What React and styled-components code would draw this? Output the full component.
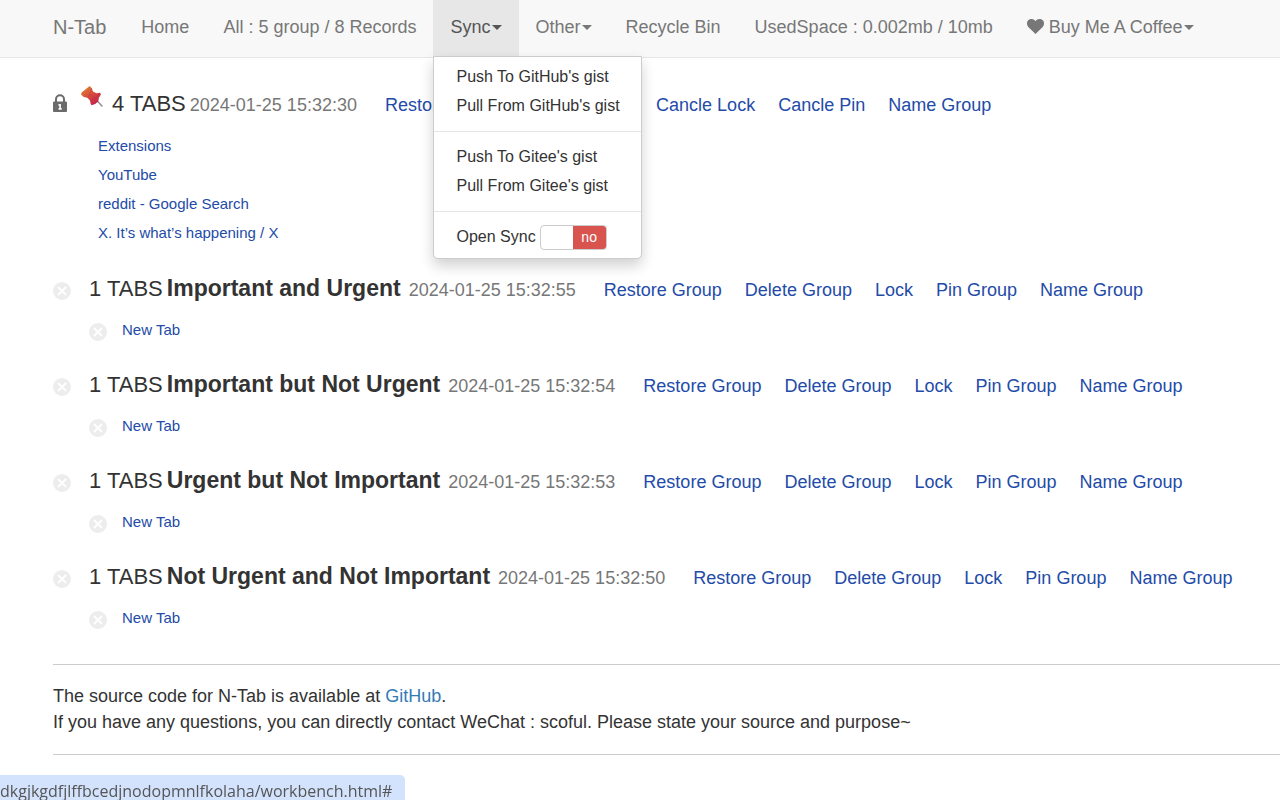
import React from "react"
import styled, { createGlobalStyle } from "styled-components"

const GlobalStyle = createGlobalStyle`
  * {
    box-sizing: border-box;
  }

  body {
    margin: 0;
    background: #fff;
    color: #333;
    font: 18px/26px "Liberation Sans", Arial, sans-serif;
  }

  a {
    color: #234ba8;
    text-decoration: none;
  }
`

const Navbar = styled.nav`
  display: flex;
  padding-left: 36px;
  background: #f8f8f8;
  border-bottom: 1px solid #e7e7e7;
  white-space: nowrap;
`

const NavItem = styled.div`
  position: relative;
`

const NavLink = styled.a`
  display: flex;
  align-items: center;
  height: 57px;
  padding: 0 17px 3px;
  color: ${({ $open }) => ($open ? "#555" : "#777")};
  background: ${({ $open }) => ($open ? "#e7e7e7" : "transparent")};
`

const Brand = styled(NavLink)`
  padding-right: 18px;
  font-size: 20px;
`

const Caret = styled.span`
  margin-left: 1px;
  border-top: 5px solid;
  border-left: 5px solid transparent;
  border-right: 5px solid transparent;
`

const HeartIcon = styled.svg`
  width: 17px;
  height: 16px;
  margin-right: 5px;
`

const Menu = styled.div`
  position: absolute;
  top: 56px;
  left: 0;
  z-index: 10;
  padding: 5px 0 7px;
  background: #fff;
  border: 1px solid #ccc;
  border-radius: 0 0 5px 5px;
  box-shadow: 0 7px 14px rgba(0, 0, 0, 0.18);
  font-size: 16px;
  line-height: 29px;

  hr {
    margin: 11px 0 10px;
    border: 0;
    border-top: 1px solid #e5e5e5;
  }
`

const MenuLink = styled.a`
  display: block;
  padding: 0 21px 0 22px;
  color: #333;
`

const SwitchLabel = styled.label`
  display: flex;
  align-items: center;
  gap: 4px;
  padding: 0 21px 0 22px;
`

const Switch = styled.input`
  appearance: none;
  width: 67px;
  height: 25px;
  margin: 2px 0 0;
  border: 1px solid #ccc;
  border-radius: 4px;
  overflow: hidden;
  display: flex;
  justify-content: flex-end;

  &::after {
    content: "no";
    width: 33px;
    background: #d9534f;
    color: #fff;
    font: 14px/23px "Liberation Sans", Arial, sans-serif;
    text-align: center;
  }

  &:checked {
    justify-content: flex-start;
  }

  &:checked::after {
    content: "yes";
    background: #337ab7;
  }
`

const Content = styled.main`
  padding: 32px 0 0 53px;
`

const Group = styled.section`
  margin-bottom: ${({ $locked }) => ($locked ? "27px" : "26px")};
`

const GroupHeader = styled.header`
  display: flex;
  height: 30px;
  line-height: 28px;
  white-space: nowrap;
`

const LockIcon = styled.svg`
  width: 14px;
  height: 18px;
  margin: 4px 14px 0 0;
`

const PinIcon = styled.svg`
  width: 22px;
  height: 22px;
  margin: -4px 9px 0 0;
`

const GroupTitle = styled.div`
  display: flex;
  align-items: baseline;
  gap: 4px;
`

const Count = styled.span`
  font-size: 22px;
`

const Name = styled.strong`
  margin-right: 4px;
  font-size: 23px;
`

const Time = styled.time`
  color: #777;
`

const Actions = styled.div`
  display: flex;
  align-items: baseline;
  gap: 23px;
  margin-left: 24px;
`

const TabList = styled.ul`
  margin: 11px 0 0;
  padding: 0 0 0 ${({ $locked }) => ($locked ? "45px" : "36px")};
  list-style: none;
  font-size: 15px;
  line-height: 29px;
`

const Tab = styled.li`
  display: flex;
`

const RemoveButton = styled.button`
  width: 18px;
  height: 18px;
  margin: 8px ${({ $tab }) => ($tab ? "15px" : "18px")} 0 0;
  padding: 0;
  border: 0;
  background: none;

  svg {
    display: block;
  }
`

const Footer = styled.footer`
  margin-top: 32px;
  padding: 18px 0 19px;
  border-top: 1px solid #ccc;
  border-bottom: 1px solid #ccc;

  p {
    margin: 0;
  }

  a {
    color: #337ab7;
  }
`

const StatusBar = styled.div`
  position: fixed;
  left: 0;
  bottom: 0;
  height: 25px;
  padding-right: 13px;
  background: #d3e3fd;
  border-top-right-radius: 5px;
  color: #555;
  font: 16px/32px "Open Sans", "Noto Sans", sans-serif;
`

const Remove = ({ label, tab }) => (
  <RemoveButton type="button" aria-label={label} $tab={tab}>
    <svg width="18" height="18" viewBox="0 0 18 18">
      <circle cx="9" cy="9" r="9" fill="#ededed" />
      <path d="M5 5l8 8M13 5l-8 8" stroke="#fff" strokeWidth="1.8" />
    </svg>
  </RemoveButton>
)

const Lock = () => (
  <LockIcon viewBox="0 0 14 18" aria-hidden="true">
    <path
      d="M3 9V5.2a4 4 0 0 1 8 0V9"
      fill="none"
      stroke="#6b6b6b"
      strokeWidth="2"
    />
    <rect y="7.5" width="14" height="10.5" rx="1" fill="#6b6b6b" />
    <path d="M5.5 10h2.4v4h.8v1.7H5.6V14h.7v-2.3h-.8z" fill="#fff" />
  </LockIcon>
)

const Pin = () => (
  <PinIcon viewBox="0 0 22 22" aria-hidden="true">
    <defs>
      <linearGradient id="pin" x1="0" y1="0" x2="0.7" y2="1">
        <stop offset="0" stopColor="#e0902f" />
        <stop offset="0.5" stopColor="#d8503c" />
        <stop offset="1" stopColor="#c4204d" />
      </linearGradient>
    </defs>
    <path d="M14 12.5l7.4 8" stroke="#8f8f8f" strokeWidth="1.4" />
    <path
      d="M8.6 0L10.8 2.2 12 5.6 15.5 7.2 19 6.8 20 8.6 18 11.4 17.2 15.4 14.2 18 10.6 19.2 9.6 17.8 9 14.6 6.4 11.8 2.8 11 0 8.4 0.8 6.2 5 3z"
      fill="url(#pin)"
    />
    <path
      d="M10.8 2.2L9 8 14.2 12 19 6.8M6.4 11.8L9 8M9 14.6L14.2 12"
      fill="none"
      stroke="#b8293d"
      strokeOpacity="0.5"
      strokeWidth="0.7"
    />
  </PinIcon>
)

const Heart = () => (
  <HeartIcon viewBox="0 0 17 16" aria-hidden="true">
    <path
      d="M8.5 15L1.3 8C-.3 6.2-.4 3.4.8 1.8 2.5-.5 6.7-.8 8.5 2.3 10.3-.8 14.5-.5 16.2 1.8c1.2 1.6 1.1 4.4-.5 6.2z"
      fill="currentColor"
    />
  </HeartIcon>
)

const groups = [
  {
    time: "2024-01-25 15:32:30",
    locked: true,
    tabs: [
      "Extensions",
      "YouTube",
      "reddit - Google Search",
      "X. It’s what’s happening / X",
    ],
  },
  {
    name: "Important and Urgent",
    time: "2024-01-25 15:32:55",
    tabs: ["New Tab"],
  },
  {
    name: "Important but Not Urgent",
    time: "2024-01-25 15:32:54",
    tabs: ["New Tab"],
  },
  {
    name: "Urgent but Not Important",
    time: "2024-01-25 15:32:53",
    tabs: ["New Tab"],
  },
  {
    name: "Not Urgent and Not Important",
    time: "2024-01-25 15:32:50",
    tabs: ["New Tab"],
  },
]

const openActions = [
  "Restore Group",
  "Delete Group",
  "Lock",
  "Pin Group",
  "Name Group",
]
const lockedActions = [
  "Restore Group",
  "Delete Group",
  "Cancle Lock",
  "Cancle Pin",
  "Name Group",
]

const TabGroup = ({ name, time, locked, tabs }) => (
  <Group $locked={locked}>
    <GroupHeader>
      {locked ? (
        <>
          <Lock />
          <Pin />
        </>
      ) : (
        <Remove label="Remove group" />
      )}
      <GroupTitle>
        <Count>{tabs.length} TABS</Count>
        {name && <Name>{name}</Name>}
        <Time>{time}</Time>
        <Actions>
          {(locked ? lockedActions : openActions).map(action => (
            <a key={action} href="#">
              {action}
            </a>
          ))}
        </Actions>
      </GroupTitle>
    </GroupHeader>
    <TabList $locked={locked}>
      {tabs.map(tab => (
        <Tab key={tab}>
          {!locked && <Remove label="Remove tab" tab />}
          <a href="#">{tab}</a>
        </Tab>
      ))}
    </TabList>
  </Group>
)

const SyncMenu = () => (
  <Menu>
    <MenuLink href="#">Push To GitHub's gist</MenuLink>
    <MenuLink href="#">Pull From GitHub's gist</MenuLink>
    <hr />
    <MenuLink href="#">Push To Gitee's gist</MenuLink>
    <MenuLink href="#">Pull From Gitee's gist</MenuLink>
    <hr />
    <SwitchLabel>
      Open Sync
      <Switch type="checkbox" />
    </SwitchLabel>
  </Menu>
)

export default () => (
  <>
    <GlobalStyle />
    <Navbar>
      <Brand href="#">N-Tab</Brand>
      <NavLink href="#">Home</NavLink>
      <NavLink href="#">All : 5 group / 8 Records</NavLink>
      <NavItem>
        <NavLink href="#" $open>
          Sync
          <Caret />
        </NavLink>
        <SyncMenu />
      </NavItem>
      <NavLink href="#">
        Other
        <Caret />
      </NavLink>
      <NavLink href="#">Recycle Bin</NavLink>
      <NavLink href="#">UsedSpace : 0.002mb / 10mb</NavLink>
      <NavLink href="#">
        <Heart />
        Buy Me A Coffee
        <Caret />
      </NavLink>
    </Navbar>
    <Content>
      {groups.map(group => (
        <TabGroup key={group.time} {...group} />
      ))}
      <Footer>
        <p>
          The source code for N-Tab is available at <a href="#">GitHub</a>.
        </p>
        <p>
          If you have any questions, you can directly contact WeChat : scoful.
          Please state your source and purpose~
        </p>
      </Footer>
    </Content>
    <StatusBar>dkgjkgdfjlffbcedjnodopmnlfkolaha/workbench.html#</StatusBar>
  </>
)
